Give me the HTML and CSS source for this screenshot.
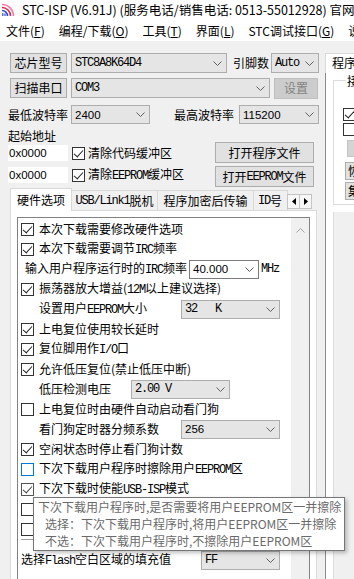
FILE: index.html
```html
<!DOCTYPE html>
<html lang="zh-CN">
<head>
<meta charset="utf-8">
<title>STC-ISP</title>
<link rel="stylesheet" href="styles.css">
</head>
<body>
<header class="titlebar">
  <svg class="app-icon" width="14" height="14" viewBox="0 0 14 14" aria-hidden="true">
    <path d="M1 1.5A11.5 11.5 0 0 1 12.5 13" fill="none" stroke="#f27aa8" stroke-width="1.6"/>
    <path d="M1 4.5A8.5 8.5 0 0 1 9.5 13" fill="none" stroke="#e3263f" stroke-width="1.6"/>
    <path d="M1 7.5A5.5 5.5 0 0 1 6.5 13" fill="none" stroke="#2f4fd0" stroke-width="1.6"/>
    <path d="M1.8 10V13M4 10.5V13" stroke="#2f4fd0" stroke-width="1.2"/>
  </svg>
  <span class="title">STC-ISP (V6.91J) (服务电话/销售电话: 0513-55012928) 官网</span>
</header>
<nav class="menubar">
  <span>文件(<u>F</u>)</span>
  <span>编程/下载(<u>O</u>)</span>
  <span>工具(<u>T</u>)</span>
  <span>界面(<u>L</u>)</span>
  <span>STC调试接口(<u>G</u>)</span>
  <span>说</span>
</nav>
<main class="workspace">
  <section class="left">
    <div class="row r1">
      <button class="btn b-chip">芯片型号</button>
      <div class="combo c-chip"><span class="m">STC8A8K64D4</span><svg class="chev" width="9" height="5" viewBox="0 0 9 5"><path d="M.5.5 4.5 4.5 8.5.5" fill="none" stroke="#606060"/></svg></div>
      <span class="lbl l-pins">引脚数</span>
      <div class="combo c-pins"><span class="m">Auto</span><svg class="chev" width="9" height="5" viewBox="0 0 9 5"><path d="M.5.5 4.5 4.5 8.5.5" fill="none" stroke="#606060"/></svg></div>
    </div>
    <div class="row r2">
      <button class="btn b-chip">扫描串口</button>
      <div class="combo c-port"><span class="m">COM3</span><svg class="chev" width="9" height="5" viewBox="0 0 9 5"><path d="M.5.5 4.5 4.5 8.5.5" fill="none" stroke="#606060"/></svg></div>
      <button class="btn b-set" disabled>设置</button>
    </div>
    <div class="row r3">
      <span class="lbl l-baud">最低波特率</span>
      <div class="combo c-baud1"><span class="num">2400</span><svg class="chev" width="9" height="5" viewBox="0 0 9 5"><path d="M.5.5 4.5 4.5 8.5.5" fill="none" stroke="#606060"/></svg></div>
      <span class="lbl l-baud2">最高波特率</span>
      <div class="combo c-baud2"><span class="num">115200</span><svg class="chev" width="9" height="5" viewBox="0 0 9 5"><path d="M.5.5 4.5 4.5 8.5.5" fill="none" stroke="#606060"/></svg></div>
    </div>
    <div class="addr">
      <div class="addr-fields">
        <div class="addr-label">起始地址</div>
        <div class="addr-row"><span class="field num">0x0000</span><span class="cb on"></span><span class="cb-text">清除代码缓冲区</span></div>
        <div class="addr-row"><span class="field num">0x0000</span><span class="cb on"></span><span class="cb-text">清除<span class="m">EEPROM</span>缓冲区</span></div>
      </div>
      <div class="addr-buttons">
        <button class="btn b-open">打开程序文件</button>
        <button class="btn b-open">打开<span class="m">EEPROM</span>文件</button>
      </div>
    </div>
    <div class="tabs">
      <span class="tab active t-hw">硬件选项</span>
      <span class="tab t-usb"><span class="m">USB/Link1</span>脱机</span>
      <span class="tab t-enc">程序加密后传输</span>
      <span class="tab t-id"><span class="m">ID</span>号</span>
      <span class="tab-arrows">
        <span class="arr"><svg width="4" height="7" viewBox="0 0 4 7"><path d="M4 0V7L0 3.5Z" fill="#000"/></svg></span>
        <span class="arr"><svg width="4" height="7" viewBox="0 0 4 7"><path d="M0 0V7L4 3.5Z" fill="#000"/></svg></span>
      </span>
    </div>
    <div class="tab-page">
      <div class="opt-list">
        <div class="opt-items">
          <div class="item"><span class="cb on"></span><span>本次下载需要修改硬件选项</span></div>
          <div class="item"><span class="cb on"></span><span>本次下载需要调节<span class="m">IRC</span>频率</span></div>
          <div class="item ind1"><span>输入用户程序运行时的<span class="m">IRC</span>频率</span><span class="combo c-irc"><span class="num">40.000</span><svg class="chev" width="9" height="5" viewBox="0 0 9 5"><path d="M.5.5 4.5 4.5 8.5.5" fill="none" stroke="#606060"/></svg></span><span class="m unit">MHz</span></div>
          <div class="item"><span class="cb on"></span><span>振荡器放大增益(<span class="m">12M</span>以上建议选择)</span></div>
          <div class="item ind2"><span class="olbl w142">设置用户<span class="m">EEPROM</span>大小</span><span class="combo c-opt"><span class="m">32&nbsp;&nbsp;&nbsp;K</span><svg class="chev" width="9" height="5" viewBox="0 0 9 5"><path d="M.5.5 4.5 4.5 8.5.5" fill="none" stroke="#606060"/></svg></span></div>
          <div class="item"><span class="cb on"></span><span>上电复位使用较长延时</span></div>
          <div class="item"><span class="cb on"></span><span>复位脚用作<span class="m">I/O</span>口</span></div>
          <div class="item"><span class="cb on"></span><span>允许低压复位(禁止低压中断)</span></div>
          <div class="item ind2"><span class="olbl w92">低压检测电压</span><span class="combo c-opt"><span class="m">2.00 V</span><svg class="chev" width="9" height="5" viewBox="0 0 9 5"><path d="M.5.5 4.5 4.5 8.5.5" fill="none" stroke="#606060"/></svg></span></div>
          <div class="item"><span class="cb"></span><span>上电复位时由硬件自动启动看门狗</span></div>
          <div class="item ind2"><span class="olbl w142">看门狗定时器分频系数</span><span class="combo c-opt"><span class="num">256</span><svg class="chev" width="9" height="5" viewBox="0 0 9 5"><path d="M.5.5 4.5 4.5 8.5.5" fill="none" stroke="#606060"/></svg></span></div>
          <div class="item"><span class="cb on"></span><span>空闲状态时停止看门狗计数</span></div>
          <div class="item"><span class="cb hover"></span><span>下次下载用户程序时擦除用户<span class="m">EEPROM</span>区</span></div>
          <div class="item"><span class="cb on dim"></span><span>下次下载时使能<span class="m">USB-ISP</span>模式</span></div>
          <div class="item"><span class="cb"></span></div>
          <div class="item"><span class="cb"></span></div>
          <div class="sep"></div>
          <div class="item"><span class="olbl w180">选择<span class="m">Flash</span>空白区域的填充值</span><span class="combo c-ff"><span class="m">FF</span><svg class="chev" width="9" height="5" viewBox="0 0 9 5"><path d="M.5.5 4.5 4.5 8.5.5" fill="none" stroke="#606060"/></svg></span></div>
        </div>
        <div class="scroll"><svg width="9" height="5" viewBox="0 0 9 5"><path d="M.5 4.5 4.5.5 8.5 4.5" fill="none" stroke="#a6a6a6"/></svg></div>
      </div>
    </div>
  </section>
  <aside class="right">
    <div class="rtab">程序文件</div>
    <div class="rpage">
      <div class="rgroup">
        <span class="rlegend">接收缓冲区</span>
        <span class="cb on r-cb1"></span>
        <span class="cb r-cb2"></span>
        <span class="rbtn r-b1"></span>
        <span class="rbtn r-b2">恢复</span>
        <span class="rbtn r-b3">集成</span>
      </div>
      <div class="rlower"></div>
    </div>
  </aside>
</main>
<div class="tooltip">
  <div>下次下载用户程序时,是否需要将用户EEPROM区一并擦除</div>
  <div class="sub">选择：下次下载用户程序时,将用户EEPROM区一并擦除</div>
  <div class="sub">不选：下次下载用户程序时,不擦除用户EEPROM区</div>
</div>
</body>
</html>
```
FILE: styles.css
```css
* { box-sizing: border-box; }
html, body { margin: 0; padding: 0; }
body {
  width: 354px;
  height: 579px;
  overflow: hidden;
  position: relative;
  background: #f0f0f0;
  font-family: "Noto Sans CJK SC", "Noto Sans", sans-serif;
  font-size: 12px;
  line-height: 16px;
  color: #000;
}
u { text-decoration: underline; text-underline-offset: 1px; }
.m { font-family: "Liberation Mono", monospace; font-size: 12px; letter-spacing: -1.2px; }
.num { font-family: "Liberation Sans", Arial, sans-serif; font-size: 11.5px; }

/* title + menu */
.titlebar {
  height: 20px; background: #fff; display: flex; align-items: center;
  padding-left: 1px; white-space: nowrap; overflow: hidden;
}
.app-icon { flex: none; margin-right: 7px; }
.title { font-size: 12.5px; }
.menubar {
  height: 21px; background: #fff; display: flex; align-items: center;
  gap: 14px; padding-left: 6px; white-space: nowrap; overflow: hidden;
}

/* workspace */
.workspace { display: flex; height: 538px; }
.left { width: 323px; flex: none; display: flex; flex-direction: column; }
.row { display: flex; align-items: center; }
.r1 { margin-top: 12px; height: 20px; padding-left: 10px; }
.r2 { margin-top: 5px; height: 20px; padding-left: 10px; }
.r3 { margin-top: 7px; height: 19px; padding-left: 8px; }
.lbl { white-space: nowrap; }

.btn {
  font: inherit; color: #000; background: #e1e1e1; border: 1px solid #adadad;
  padding: 0; margin: 0; display: flex; align-items: center; justify-content: center;
  white-space: nowrap;
}
.b-chip { width: 57px; height: 20px; }
.b-set { width: 44px; height: 21px; margin-left: 4px; background: #cccccc; border-color: #bfbfbf; color: #838383; }

.combo {
  height: 20px; display: flex; align-items: center; background: #e5e5e5;
  border: 1px solid #adadad; padding: 0 4px 0 3px; white-space: nowrap; overflow: hidden; flex: none;
}
.combo .chev { margin-left: auto; flex: none; }
.c-chip { width: 156px; margin-left: 4px; }
.l-pins { margin-left: 6px; }
.c-pins { width: 48px; margin-left: 2px; }
.c-port { width: 199px; margin-left: 4px; }
.l-baud { width: 60px; }
.c-baud1 { width: 79px; height: 19px; margin-left: 3px; }
.l-baud2 { width: 60px; margin-left: 24px; }
.c-baud2 { width: 80px; height: 19px; margin-left: 5px; }

/* address block */
.addr { display: flex; padding-left: 8px; }
.addr-fields { width: 207px; }
.addr-label { margin-top: 4px; height: 16px; }
.addr-row { display: flex; align-items: center; height: 16px; margin-top: 1px; }
.addr-row + .addr-row { margin-top: 6px; }
.field { width: 60px; height: 16px; background: #fff; padding-left: 1px; line-height: 16px; }
.addr-row .cb { margin-left: 4px; }
.cb-text { margin-left: 3px; white-space: nowrap; }
.addr-buttons { display: flex; flex-direction: column; gap: 3px; padding-top: 18px; }
.b-open { width: 99px; height: 21px; }

/* checkbox */
.cb {
  width: 13px; height: 13px; border: 1px solid #333; background: #fff;
  flex: none; position: relative; display: inline-block;
}
.cb.on::after {
  content: ""; position: absolute; left: 3px; top: 0px; width: 4px; height: 8px;
  border: solid #222; border-width: 0 1.3px 1.3px 0; transform: rotate(42deg);
}
.cb.hover { border-color: #0078d7; }
.cb.dim { border-color: #555; }
.cb.dim::after { border-color: #444; }

/* tabs */
.tabs {
  display: flex; align-items: flex-end; height: 22px; margin-top: 1px;
  padding-left: 10px; position: relative; z-index: 1; white-space: nowrap;
}
.tab {
  height: 20px; border: 1px solid #d9d9d9; border-bottom: none; margin-left: -1px;
  display: flex; align-items: center; justify-content: center; background: #f0f0f0; flex: none;
  overflow: hidden;
}
.tab.active { height: 23px; margin-left: 0; margin-bottom: -1px; background: #fff; }
.t-hw { width: 62px; }
.t-usb { width: 87px; }
.t-enc { width: 97px; }
.t-id { width: 35px; justify-content: flex-start; padding-left: 4px; }
.tab-arrows { display: flex; margin-bottom: 1px; margin-left: -1px; }
.arr {
  width: 13px; height: 15px; border: 1px solid #c4c4c4; background: #f7f7f7;
  display: flex; align-items: center; justify-content: center;
}
.arr + .arr { margin-left: -1px; }

.tab-page {
  margin-left: 10px; width: 307px; flex: 1; min-height: 0; background: #fff;
  border: 1px solid #d9d9d9; border-bottom: none; padding: 6px 6px 0;
  display: flex; flex-direction: column;
}
.opt-list { flex: 1; min-height: 0; display: flex; border: 1px solid #828282; border-bottom: none; overflow: hidden; }
.opt-items { flex: 1; padding-top: 1px; }
.scroll { width: 18px; flex: none; background: #f0f0f0; display: flex; justify-content: center; align-items: flex-start; padding-top: 10px; }
.item { height: 20px; display: flex; align-items: center; padding-left: 3px; white-space: nowrap; }
.item .cb + span { margin-left: 5px; }
.ind1 { padding-left: 7px; }
.ind2 { padding-left: 21px; }
.olbl { flex: none; }
.w92 { width: 92px; }
.w142 { width: 142px; }
.w180 { width: 180px; }
.item .combo { height: 19px; }
.c-opt { width: 99px; }
.c-ff { width: 79px; }
.c-irc { width: 70px; margin-left: 2px; background: #fff; border-color: #7a7a7a; }
.unit { margin-left: 2px; }
.sep { height: 1px; background: #a0a0a0; margin: 0 0 10px 3px; }

/* right panel */
.right { flex: 1; min-width: 0; padding-top: 12px; display: flex; flex-direction: column; overflow: hidden; }
.rtab {
  margin-left: 2px; width: 60px; height: 20px; background: #fff; border: 1px solid #d9d9d9;
  border-bottom: none; padding-left: 6px; line-height: 18px; white-space: nowrap;
  position: relative; z-index: 1; margin-bottom: -1px; flex: none;
}
.rpage {
  margin-left: 2px; flex: 1; background: #fff; border-top: 1px solid #d9d9d9;
  border-left: 1px solid #8c8c8c; padding: 7px 0 0 7px; display: flex; flex-direction: column;
}
.rgroup {
  height: 125px; border: 1px solid #dcdcdc; border-right: none; padding-left: 9px;
  display: flex; flex-direction: column; align-items: flex-start; flex: none;
}
.rlegend { margin: -8px 0 0 3px; background: #fff; padding: 0 1px; white-space: nowrap; line-height: 16px; }
.r-cb1 { margin-top: 19px; }
.r-cb2 { margin-top: 2px; }
.rbtn {
  display: block; width: 40px; background: #e1e1e1; border: 1px solid #adadad;
  white-space: nowrap; padding-left: 2px; line-height: 16px;
}
.r-b1 { margin: 4px 0 0 4px; height: 17px; background: #d4d4d4; border-color: #c4c4c4; }
.r-b2 { margin: 5px 0 0 2px; height: 18px; }
.r-b3 { margin: 2px 0 0 2px; height: 18px; }
.rlower { margin-top: 7px; flex: 1; background: #f0f0f0; border-left: 1px solid #dcdcdc; }

/* tooltip */
.tooltip {
  position: absolute; left: 33px; top: 497px; width: 312px; height: 54px;
  background: #fff; border: 1px solid #767676; box-shadow: 2px 2px 4px rgba(0, 0, 0, 0.25);
  padding-left: 4px; color: #6a6a6a; font-size: 12px; line-height: 17px;
  white-space: nowrap; overflow: hidden;
}
.tooltip .sub { padding-left: 7px; }
```
